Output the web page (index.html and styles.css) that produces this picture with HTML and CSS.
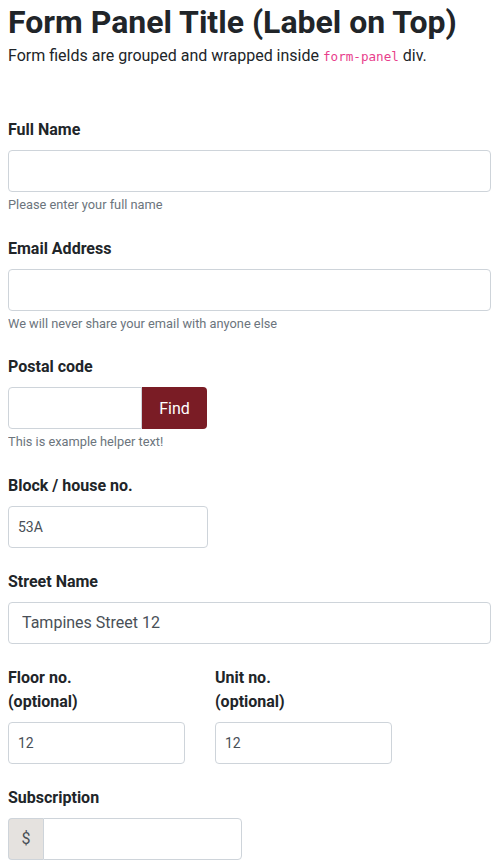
FILE: index.html
```html
<!DOCTYPE html>
<html lang="en">
<head>
<meta charset="utf-8">
<title>Form Panel</title>
<link rel="stylesheet" href="styles.css">
</head>
<body>
<h1 class="title">Form Panel Title (Label on Top)</h1>
<p class="subtitle">Form fields are grouped and wrapped inside <code class="code">form-panel</code> div.</p>

<div class="form-panel">
  <div class="group">
    <label class="label">Full Name</label>
    <input class="input input-full" type="text">
    <div class="helper">Please enter your full name</div>
  </div>

  <div class="group">
    <label class="label">Email Address</label>
    <input class="input input-full" type="text">
    <div class="helper">We will never share your email with anyone else</div>
  </div>

  <div class="group">
    <label class="label">Postal code</label>
    <div class="postal">
      <input class="input input-postal" type="text">
      <button class="btn-find" type="button">Find</button>
    </div>
    <div class="helper">This is example helper text!</div>
  </div>

  <div class="group">
    <label class="label">Block / house no.</label>
    <input class="input input-block" type="text" value="53A">
  </div>

  <div class="group">
    <label class="label">Street Name</label>
    <input class="input input-full input-lg" type="text" value="Tampines Street 12">
  </div>

  <div class="group row">
    <div class="col">
      <label class="label">Floor no.<br>(optional)</label>
      <input class="input input-half" type="text" value="12">
    </div>
    <div class="col">
      <label class="label">Unit no.<br>(optional)</label>
      <input class="input input-half" type="text" value="12">
    </div>
  </div>

  <div class="group">
    <label class="label">Subscription</label>
    <div class="addon-group">
      <span class="addon">$</span>
      <input class="input input-addon" type="text">
    </div>
  </div>
</div>
</body>
</html>
```

FILE: styles.css
```css
* { box-sizing: border-box; }

body {
  margin: 8px;
  font-family: Roboto, "Liberation Sans", sans-serif;
  color: #212529;
  background: #ffffff;
}

.title {
  margin: 0;
  font-size: 32px;
  font-weight: 700;
  line-height: 28px;
}

.subtitle {
  margin: 8px 0 0;
  font-size: 16px;
  line-height: 24px;
}

.code {
  font-family: "DejaVu Sans Mono", monospace;
  font-size: 12.6px;
  color: #e83e8c;
}

.form-panel {
  margin-top: 49px;
  width: 483px;
}

.group {
  margin-bottom: 22px;
}

.label {
  display: block;
  font-size: 16px;
  font-weight: 700;
  line-height: 24px;
  margin-bottom: 8px;
}

.input {
  display: block;
  height: 42px;
  border: 1px solid #ced4da;
  border-radius: 4px;
  padding: 0 9px;
  font-family: Roboto, "Liberation Sans", sans-serif;
  font-size: 14px;
  color: #495057;
  background: #fff;
  outline: none;
}

.input-full { width: 483px; }
.input-block { width: 200px; }
.input-lg { font-size: 16px; padding: 0 13px; }

.helper {
  margin-top: 4px;
  font-size: 12.8px;
  line-height: 18.5px;
  color: #6c757d;
}

.postal {
  display: flex;
  width: 200px;
}

.input-postal {
  width: 134px;
  border-radius: 4px 0 0 4px;
}

.btn-find {
  width: 65px;
  height: 42px;
  border: none;
  border-radius: 0 4px 4px 0;
  background: #7a1c25;
  color: #fff;
  font-family: Roboto, "Liberation Sans", sans-serif;
  font-size: 16px;
  padding: 0;
}

.row {
  display: flex;
  gap: 30px;
}

.col {
  width: 177px;
}

.input-half { width: 177px; }

.addon-group {
  display: flex;
  width: 234px;
}

.addon {
  display: flex;
  align-items: center;
  justify-content: center;
  width: 35px;
  height: 42px;
  background: #e5e2df;
  border: 1px solid #ced4da;
  border-right: none;
  border-radius: 4px 0 0 4px;
  font-size: 16px;
  color: #495057;
}

.input-addon {
  width: 199px;
  border-radius: 0 4px 4px 0;
}
```
